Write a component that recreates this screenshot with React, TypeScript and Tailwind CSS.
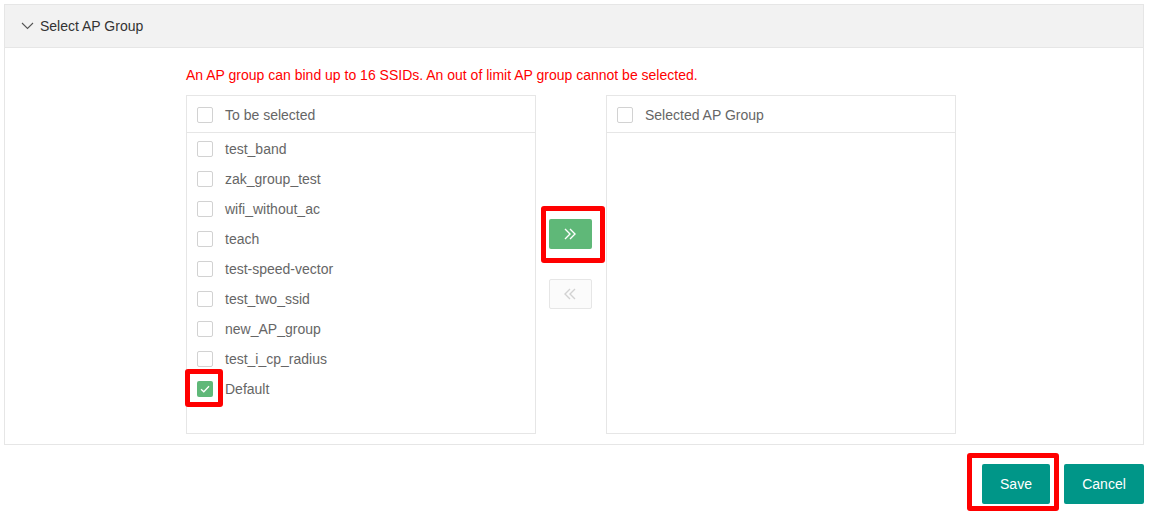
import React from "react";

const items = [
  "test_band",
  "zak_group_test",
  "wifi_without_ac",
  "teach",
  "test-speed-vector",
  "test_two_ssid",
  "new_AP_group",
  "test_i_cp_radius",
];

function Box({ checked = false }: { checked?: boolean }) {
  if (checked) {
    return (
      <span className="w-[16px] h-[16px] rounded-[2px] bg-[#5fb878] flex items-center justify-center shrink-0">
        <svg width="10" height="8" viewBox="0 0 10 8" fill="none">
          <path d="M1 4.2 L3.8 6.8 L9 1.2" stroke="#fff" strokeWidth="1.3" />
        </svg>
      </span>
    );
  }
  return <span className="w-[16px] h-[16px] rounded-[2px] border border-[#d2d2d2] bg-white shrink-0" />;
}

export default function App() {
  return (
    <div
      className="relative w-[1166px] h-[513px] bg-white overflow-hidden"
      style={{ fontFamily: '"Liberation Sans", Arial, sans-serif' }}
    >
      <div className="ml-[4px] mt-[4px] w-[1140px] border border-[#e6e6e6]">
        <div className="h-[43px] bg-[#f2f2f2] border-b border-[#e6e6e6] flex items-center pl-[16px] text-[14px] text-[#333]">
          <svg width="13" height="8" viewBox="0 0 13 8" fill="none" className="mr-[6px]">
            <path d="M1 1 L6.5 6.5 L12 1" stroke="#555" strokeWidth="1.1" />
          </svg>
          <span>Select AP Group</span>
        </div>
        <div className="pl-[181px] pt-[19px] pb-[10px]">
          <div className="text-[14px] leading-[16px] text-[#ff0000] mb-[12px]">
            An AP group can bind up to 16 SSIDs. An out of limit AP group cannot be selected.
          </div>
          <div className="flex">
            <div className="w-[350px] h-[339px] border border-[#e6e6e6]">
              <div className="h-[37px] pt-[2px] border-b border-[#e6e6e6] flex items-center pl-[10px] gap-[12px] text-[14px] text-[#666]">
                <Box />
                <span>To be selected</span>
              </div>
              <div className="pt-[1px]">
                {items.map((it) => (
                  <div key={it} className="h-[30px] flex items-center pl-[10px] gap-[12px] text-[14px] text-[#666]">
                    <Box />
                    <span>{it}</span>
                  </div>
                ))}
                <div className="h-[30px] flex items-center pl-[10px] gap-[12px] text-[14px] text-[#666]">
                  <Box checked />
                  <span>Default</span>
                </div>
              </div>
            </div>
            <div className="w-[70px] flex flex-col items-center justify-center gap-[30px] pr-[2px] pb-[2px]">
              <div className="w-[43px] h-[30px] rounded-[2px] bg-[#5fb878] flex items-center justify-center">
                <svg width="14" height="12" viewBox="0 0 14 12" fill="none">
                  <path d="M2 1 L7 6 L2 11 M7 1 L12 6 L7 11" stroke="#fff" strokeWidth="1.4" />
                </svg>
              </div>
              <div className="w-[43px] h-[30px] rounded-[2px] bg-[#fbfbfb] border border-[#e6e6e6] flex items-center justify-center">
                <svg width="14" height="12" viewBox="0 0 14 12" fill="none">
                  <path d="M12 1 L7 6 L12 11 M7 1 L2 6 L7 11" stroke="#d2d2d2" strokeWidth="1.4" />
                </svg>
              </div>
            </div>
            <div className="w-[350px] h-[339px] border border-[#e6e6e6]">
              <div className="h-[37px] pt-[2px] border-b border-[#e6e6e6] flex items-center pl-[10px] gap-[12px] text-[14px] text-[#666]">
                <Box />
                <span>Selected AP Group</span>
              </div>
            </div>
          </div>
        </div>
      </div>
      <div className="flex justify-end w-[1144px] mt-[19px] gap-[14px]">
        <button className="w-[68px] h-[40px] rounded-[2px] bg-[#009688] text-white text-[14px]">Save</button>
        <button className="w-[80px] h-[40px] rounded-[2px] bg-[#009688] text-white text-[14px]">Cancel</button>
      </div>

      <div className="absolute left-[541px] top-[206px] w-[64px] h-[57px] border-[5px] border-[#ff0000] rounded-[3px]" />
      <div className="absolute left-[185px] top-[369px] w-[38px] h-[38px] border-[5px] border-[#ff0000] rounded-[3px]" />
      <div className="absolute left-[967px] top-[453px] w-[92px] h-[58px] border-[5px] border-[#ff0000] rounded-[3px]" />
    </div>
  );
}
